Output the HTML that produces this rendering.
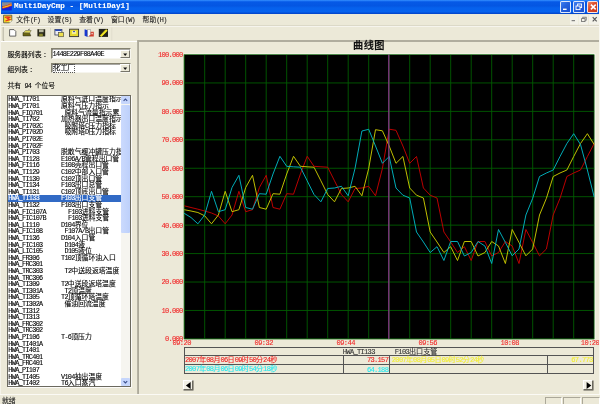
<!DOCTYPE html>
<html lang="zh-CN"><head><meta charset="utf-8"><title>MultiDayCmp - [MultiDay1]</title>
<style>
html,body{margin:0;padding:0;}
body{width:600px;height:404px;overflow:hidden;background:#ece9d8;position:relative;font-family:"Liberation Mono","Noto Sans CJK SC",monospace;font-size:6.85px;color:#000;line-height:1;-webkit-text-stroke:0.1px;}
div,span{position:absolute;white-space:nowrap;}
.d span.l,.menu span.l,.lbl span.l{position:static;}
.l{font-family:"Liberation Mono","Noto Sans CJK SC",monospace;letter-spacing:-0.685px;}
#tb{left:0;top:0;width:600px;height:13.8px;background:linear-gradient(#3d95ff 0,#1b74f4 6%,#0659e6 14%,#0456e2 42%,#0661ec 56%,#0662ee 84%,#0450da 92%,#0341c4 100%);}
#tt{left:14px;top:2.6px;font-family:"Liberation Mono","Noto Sans CJK SC",monospace;font-weight:bold;font-size:7.7px;color:#fff;letter-spacing:0.02px;}
.wb{top:1.4px;width:11.2px;height:11.2px;border-radius:1.6px;box-sizing:border-box;border:0.55px solid rgba(255,255,255,0.85);background:linear-gradient(135deg,#3f7ef0,#2460dc 45%,#1a4fd0);}
#menu{left:0;top:14px;width:600px;height:11.5px;background:#ece9d8;}
.menu{top:16.6px;color:#222;}
#tbar{left:0;top:25.2px;width:600px;height:15.3px;background:#ece9d8;border-top:0.7px solid #dcd9c8;box-sizing:border-box;box-shadow:inset 0 0.8px 0 #f9f8f3;}
#left{left:0;top:41.7px;width:137px;height:352.3px;background:#ece9d8;}
#split{left:137.1px;top:40.2px;width:1.8px;height:353.4px;background:linear-gradient(90deg,#bab7a8,#a9a697);}
#topline{left:137.2px;top:40.2px;width:462px;height:1.5px;background:#b0ad9e;}
#lwl{left:0;top:40.5px;width:137.2px;height:1.2px;background:#fff;}
.lbl{color:#000;font-size:6.84px;}
.cb{background:#fff;border:0.9px solid;border-color:#85826f #f6f5ee #f6f5ee #85826f;box-sizing:border-box;box-shadow:inset 0.5px 0.5px 0 #55534a;}
.cbb{width:9.4px;height:8.4px;background:#ece9d8;border:0.7px solid;border-color:#fff #77756a #77756a #fff;box-sizing:border-box;}
#list{left:6.6px;top:94.9px;width:124.7px;height:292.6px;background:#fff;border:0.9px solid #6b695f;box-sizing:border-box;overflow:hidden;box-shadow:0.8px 0.8px 0 #fff;}
.row{left:0;width:115px;height:6.6px;}
.row .t{left:0.7px;top:0.2px;}
.row .d{top:0.2px;}
.row.sel{background:#316ac5;color:#fff;width:113.6px;}
#sb{left:113.6px;top:0;width:9.6px;height:291px;background:#f6f5f0;}
#sbu,#sbd{left:0.3px;width:9px;height:8.3px;background:#c6d6fc;border-radius:1px;}
#sbt{left:0.3px;top:9.6px;width:9px;height:127.5px;background:linear-gradient(90deg,#cbdafd,#bdd0fb);border-radius:1px;}
.plot{position:absolute;left:0;top:0;}
#ct{left:339px;width:60px;text-align:center;top:41.1px;font-family:"Liberation Sans","Noto Sans CJK SC",sans-serif;font-weight:bold;font-size:10.2px;color:#111;letter-spacing:0.4px;}
.yl{left:140px;width:42.6px;text-align:right;color:#f02828;font-size:7.1px;letter-spacing:-0.75px;}
.xl{top:340.1px;width:30px;text-align:center;color:#f02828;font-size:7.1px;letter-spacing:-0.6px;}
#tbl{left:184.2px;top:347px;width:409.8px;height:27.2px;border:0.9px solid #545454;box-sizing:border-box;}
.hl{left:0;width:408px;height:0.9px;background:#555;}
.vl{width:0.9px;background:#545454;top:7.4px;height:18.4px;}
.c{font-size:7.1px;}
.c .l{letter-spacing:-0.71px;position:static;}
.c.l{letter-spacing:-0.71px;}
#status{left:0;top:394px;width:600px;height:10px;background:#ece9d8;border-top:0.7px solid #fbfaf5;box-sizing:border-box;}
.ab{width:10.3px;height:10.3px;background:#f2f0e6;border:0.8px solid;border-color:#fff #6a685e #6a685e #fff;box-sizing:border-box;box-shadow:0.5px 0.5px 0 #55534a;}
.pane{top:1.5px;height:9px;border:0.7px solid #aba899;border-right-color:#fff;border-bottom-color:#fff;box-sizing:border-box;}
#all{left:0;top:0;width:600px;height:404px;overflow:hidden;will-change:transform;filter:blur(0.3px);}
</style></head><body>
<div id="all">
<div id="tb">
<svg style="position:absolute;left:0;top:0" width="14" height="14" viewBox="0 0 14 14"><rect x="2" y="2.3" width="9.8" height="4" fill="#8a8c92"/><rect x="2" y="6" width="9.8" height="4.4" fill="#1420d8"/><path d="M2.2 7.6L4.4 7.2L6 6.6L8.2 6.2L9.6 5.2L11.6 4.8" stroke="#e83818" stroke-width="2.4" fill="none"/><path d="M2.6 7.4L4.6 7L6.2 6.6L8.2 6L9.8 5.2L11.4 5" stroke="#f8e020" stroke-width="1" fill="none"/></svg>
<span id="tt">MultiDayCmp - [MultiDay1]</span>
<div class="wb" style="left:559.8px"><svg width="10" height="10" style="position:absolute;left:0;top:0"><rect x="2" y="6.6" width="3.6" height="1.4" fill="#fff"/></svg></div>
<div class="wb" style="left:573.4px"><svg width="10" height="10" style="position:absolute;left:0;top:0"><rect x="3.6" y="2" width="4" height="3.6" fill="none" stroke="#fff" stroke-width="0.9"/><rect x="2" y="4" width="4" height="3.6" fill="#2a62d8" stroke="#fff" stroke-width="0.9"/></svg></div>
<div class="wb" style="left:586.9px;width:11.6px;background:linear-gradient(135deg,#ee8866,#dc4a28 45%,#c8361a)"><svg width="10" height="10" style="position:absolute;left:0;top:0"><path d="M2.9 2.6L7.7 7.4M7.7 2.6L2.9 7.4" stroke="#fff" stroke-width="1.5"/></svg></div>
</div>
<div id="menu"></div>
<svg style="position:absolute;left:0;top:14px" width="14" height="11" viewBox="0 14 14 11"><path d="M3.6 15.2H11.8V20.6L9.6 22.8H3.6Z" fill="#f6e028" stroke="#3a3a30" stroke-width="0.7"/><path d="M11.8 20.6L9.6 22.8V20.6Z" fill="#fff"/><path d="M4.8 17.4L7 16.8L10 17.2L7.4 18.6L10 19.6L5.4 21" fill="none" stroke="#e83020" stroke-width="1.2"/></svg>
<span class="menu" style="left:16.3px">文件<span class="l">(F)</span></span>
<span class="menu" style="left:47.6px">设置<span class="l">(S)</span></span>
<span class="menu" style="left:79.2px">查看<span class="l">(V)</span></span>
<span class="menu" style="left:111px">窗口<span class="l">(W)</span></span>
<span class="menu" style="left:142.6px">帮助<span class="l">(H)</span></span>
<svg style="position:absolute;left:566px;top:14px" width="34" height="12" viewBox="0 0 34 12"><rect x="4" y="1" width="8" height="9.6" fill="#f3f2e9"/><rect x="12.6" y="1" width="9.4" height="9.6" fill="#f3f2e9"/><rect x="23" y="1" width="10" height="9.6" fill="#f3f2e9"/><rect x="5.6" y="6.1" width="3.4" height="1.1" fill="#777"/><rect x="16.8" y="3.2" width="3.4" height="3" fill="none" stroke="#6a6a6a" stroke-width="0.8"/><rect x="15.6" y="4.6" width="3.4" height="3" fill="#f3f2e9" stroke="#6a6a6a" stroke-width="0.8"/><path d="M26.7 3.2L30.7 7.4M30.7 3.2L26.7 7.4" stroke="#555" stroke-width="1.15"/></svg>
<div id="tbar">
<svg style="position:absolute;left:0;top:-0.4px" width="120" height="15" viewBox="0 25.5 120 15">
<path d="M3.2 26.5V40H4.2" stroke="#a8a594" stroke-width="0.8" fill="none"/>
<path d="M9.6 29.1H14L15.8 30.9V35.6H9.6Z" fill="#fff" stroke="#444" stroke-width="0.8"/>
<path d="M23 32H29.4L30.8 35.4H23Z" fill="#6a6410" stroke="#332" stroke-width="0.6"/><path d="M23.4 32.2L25.6 30H31.2L29.8 32.4Z" fill="#dcd458" stroke="#554" stroke-width="0.5"/><path d="M28 29.2L30 28.6" stroke="#333" stroke-width="0.6"/>
<rect x="37.4" y="28.7" width="7.8" height="7.2" fill="#2a2a1c"/><rect x="39" y="28.9" width="4.6" height="2.8" fill="#b8b8a0"/><rect x="39.2" y="33.2" width="3.6" height="2.7" fill="#8a8830"/>
<path d="M50.5 27.5V39" stroke="#d8d5c4" stroke-width="0.9"/>
<rect x="54.9" y="28.9" width="7" height="5.6" fill="#ececf4" stroke="#333a55" stroke-width="0.8"/><rect x="55.2" y="29" width="6.4" height="1.5" fill="#2848b8"/><rect x="58.6" y="32" width="5" height="4.2" fill="#efe050" stroke="#554" stroke-width="0.7"/>
<rect x="69.6" y="28.7" width="9" height="7.4" fill="#e6da30" stroke="#333" stroke-width="0.9"/><rect x="72" y="30.4" width="4.2" height="3" fill="#f4f0a0"/><rect x="73" y="30.4" width="2" height="1.2" fill="#4858c0"/>
<path d="M84.6 28.8L87.6 29.8V36.4L84.6 35.2Z" fill="#1838d0"/><rect x="87.8" y="29.2" width="2.6" height="6.8" fill="#fafafa" stroke="#777" stroke-width="0.4"/><path d="M90.6 31.2H93.8V36H89.4V34.6H90.6Z" fill="#d04030"/><rect x="91.4" y="32.4" width="1.4" height="1.4" fill="#f4d0c8"/>
<rect x="98.8" y="28.4" width="9.2" height="8" fill="#20201a"/><path d="M100.2 35.2L105.6 29.4H107V30.6L101.6 36Z" fill="#f4e820" stroke="#f4e820" stroke-width="0.7"/>
<path d="M111.8 27V40" stroke="#dcd9c8" stroke-width="0.7"/>
</svg>
</div>
<div id="topline"></div><div id="lwl"></div>
<div id="left"></div>
<div id="split"></div>
<span class="lbl" style="left:7.4px;top:51.5px">服务器列表<span style="position:static;padding-left:1.6px">：</span></span>
<div class="cb" style="left:50.8px;top:48.4px;width:80px;height:10.4px"><span class="l" style="left:0.8px;top:1.4px;position:absolute">1448E229F08A40E</span><div class="cbb" style="left:68.6px;top:0.2px"><svg width="9" height="8" style="position:absolute;left:0;top:0"><path d="M2.2 2.6H6.2L4.2 5Z" fill="#111"/></svg></div></div>
<span class="lbl" style="left:7.4px;top:66.8px">组列表<span style="position:static;padding-left:1.6px">：</span></span>
<div class="cb" style="left:50.8px;top:62.9px;width:80px;height:10.3px"><span style="left:1.8px;top:1.4px;outline:0.5px dotted #555">化工厂</span><div class="cbb" style="left:68.6px;top:0.2px"><svg width="9" height="8" style="position:absolute;left:0;top:0"><path d="M2.2 2.6H6.2L4.2 5Z" fill="#111"/></svg></div></div>
<span class="lbl" style="left:7.4px;top:83.0px">共有<span class="l"> 94 </span>个位号</span>
<div id="list">
<div class="row" style="top:0.30px"><span class="t l">HWA_TI701</span><span class="d" style="left:53.4px">原料气进口温度指示</span></div>
<div class="row" style="top:6.90px"><span class="t l">HWA_PI701</span><span class="d" style="left:53.4px">原料气压力指示</span></div>
<div class="row" style="top:13.50px"><span class="t l">HWA_FIQ701</span><span class="d" style="left:56.9px">原料气流量指示累</span></div>
<div class="row" style="top:20.10px"><span class="t l">HWA_TI702</span><span class="d" style="left:53.4px">加热器出口温度指示</span></div>
<div class="row" style="top:26.70px"><span class="t l">HWA_PI702C</span><span class="d" style="left:56.9px">吸附塔<span class="l">C</span>压力指标</span></div>
<div class="row" style="top:33.30px"><span class="t l">HWA_PI702D</span><span class="d" style="left:56.9px">吸附塔<span class="l">D</span>压力指标</span></div>
<div class="row" style="top:39.90px"><span class="t l">HWA_PI702E</span></div>
<div class="row" style="top:46.50px"><span class="t l">HWA_PI702F</span></div>
<div class="row" style="top:53.10px"><span class="t l">HWA_PI703</span><span class="d" style="left:53.4px">脱散气缓冲罐压力指</span></div>
<div class="row" style="top:59.70px"><span class="t l">HWA_TI128</span><span class="d" style="left:53.4px"><span class="l">E106A/B</span>管程出口管</span></div>
<div class="row" style="top:66.30px"><span class="t l">HWA_FI116</span><span class="d" style="left:53.4px"><span class="l">E108</span>壳程出口管</span></div>
<div class="row" style="top:72.90px"><span class="t l">HWA_TI129</span><span class="d" style="left:53.4px"><span class="l">C102</span>中部入口管</span></div>
<div class="row" style="top:79.50px"><span class="t l">HWA_TI130</span><span class="d" style="left:53.4px"><span class="l">C102</span>顶出口管</span></div>
<div class="row" style="top:86.10px"><span class="t l">HWA_TI134</span><span class="d" style="left:53.4px"><span class="l">F103</span>出口总管</span></div>
<div class="row" style="top:92.70px"><span class="t l">HWA_TI131</span><span class="d" style="left:53.4px"><span class="l">C102</span>顶底出口管</span></div>
<div class="row sel" style="top:99.30px"><span class="t l">HWA_TI133</span><span class="d" style="left:53.4px"><span class="l">F103</span>出口支管</span></div>
<div class="row" style="top:105.90px"><span class="t l">HWA_TI132</span><span class="d" style="left:53.4px"><span class="l">F103</span>出口支管</span></div>
<div class="row" style="top:112.50px"><span class="t l">HWA_FIC107A</span><span class="d" style="left:60.4px"><span class="l">F103</span>进料支管</span></div>
<div class="row" style="top:119.10px"><span class="t l">HWA_FIC107B</span><span class="d" style="left:60.4px"><span class="l">F103</span>进料支管</span></div>
<div class="row" style="top:125.70px"><span class="t l">HWA_LI110</span><span class="d" style="left:53.4px"><span class="l">D104</span>界位</span></div>
<div class="row" style="top:132.30px"><span class="t l">HWA_FIC108</span><span class="d" style="left:56.9px"><span class="l">F107A/B</span>出口管</span></div>
<div class="row" style="top:138.90px"><span class="t l">HWA_TI136</span><span class="d" style="left:53.4px"><span class="l">D104</span>入口管</span></div>
<div class="row" style="top:145.50px"><span class="t l">HWA_FIC103</span><span class="d" style="left:56.9px"><span class="l">D104</span>液</span></div>
<div class="row" style="top:152.10px"><span class="t l">HWA_LIC105</span><span class="d" style="left:56.9px"><span class="l">D105</span>液位</span></div>
<div class="row" style="top:158.70px"><span class="t l">HWA_FR306</span><span class="d" style="left:53.4px"><span class="l">T102</span>顶循环油入口</span></div>
<div class="row" style="top:165.30px"><span class="t l">HWA_FRC301</span></div>
<div class="row" style="top:171.90px"><span class="t l">HWA_TRC303</span><span class="d" style="left:56.9px"><span class="l">T2</span>中送段返塔温度</span></div>
<div class="row" style="top:178.50px"><span class="t l">HWA_TRC306</span></div>
<div class="row" style="top:185.10px"><span class="t l">HWA_TI309</span><span class="d" style="left:53.4px"><span class="l">T2</span>中送段返塔温度</span></div>
<div class="row" style="top:191.70px"><span class="t l">HWA_TI301A</span><span class="d" style="left:56.9px"><span class="l">T2</span>顶温度</span></div>
<div class="row" style="top:198.30px"><span class="t l">HWA_TI305</span><span class="d" style="left:53.4px"><span class="l">T2</span>顶循环塔温度</span></div>
<div class="row" style="top:204.90px"><span class="t l">HWA_TI302A</span><span class="d" style="left:56.9px">催油回流温度</span></div>
<div class="row" style="top:211.50px"><span class="t l">HWA_TI312</span></div>
<div class="row" style="top:218.10px"><span class="t l">HWA_TI313</span></div>
<div class="row" style="top:224.70px"><span class="t l">HWA_FRC302</span></div>
<div class="row" style="top:231.30px"><span class="t l">HWA_TRC302</span></div>
<div class="row" style="top:237.90px"><span class="t l">HWA_PI106</span><span class="d" style="left:53.4px"><span class="l">T-6</span>顶压力</span></div>
<div class="row" style="top:244.50px"><span class="t l">HWA_TI401A</span></div>
<div class="row" style="top:251.10px"><span class="t l">HWA_TI401</span></div>
<div class="row" style="top:257.70px"><span class="t l">HWA_TRC401</span></div>
<div class="row" style="top:264.30px"><span class="t l">HWA_FRC401</span></div>
<div class="row" style="top:270.90px"><span class="t l">HWA_PI107</span></div>
<div class="row" style="top:277.50px"><span class="t l">HWA_TI405</span><span class="d" style="left:53.4px"><span class="l">V104</span>抽出温度</span></div>
<div class="row" style="top:284.10px"><span class="t l">HWA_TI402</span><span class="d" style="left:53.4px"><span class="l">T6</span>入口蒸汽</span></div>
<div class="row" style="top:290.70px"><span class="t l">HWA_TI403</span><span class="d" style="left:53.4px"><span class="l">T6</span>顶出口</span></div>

<div id="sb"><div id="sbu" style="top:0.3px"><svg width="9" height="8" style="position:absolute;left:0;top:0"><path d="M2.6 4.8L4.4 3L6.2 4.8" stroke="#3a4f8c" stroke-width="1.1" fill="none"/></svg></div><div id="sbt"></div><div id="sbd" style="top:282.2px"><svg width="9" height="8" style="position:absolute;left:0;top:0"><path d="M2.6 3.2L4.4 5L6.2 3.2" stroke="#3a4f8c" stroke-width="1.1" fill="none"/></svg></div></div>
</div>
<span id="ct">曲线图</span>
<svg class="plot" width="600" height="404" viewBox="0 0 600 404">
<rect x="184.2" y="54.5" width="410.0" height="284.4" fill="#000"/>
<path d="M184.20 54.5V338.9M204.70 54.5V338.9M225.20 54.5V338.9M245.70 54.5V338.9M266.20 54.5V338.9M286.70 54.5V338.9M307.20 54.5V338.9M327.70 54.5V338.9M348.20 54.5V338.9M368.70 54.5V338.9M389.20 54.5V338.9M409.70 54.5V338.9M430.20 54.5V338.9M450.70 54.5V338.9M471.20 54.5V338.9M491.70 54.5V338.9M512.20 54.5V338.9M532.70 54.5V338.9M553.20 54.5V338.9M573.70 54.5V338.9M594.20 54.5V338.9M184.2 338.90H594.2M184.2 310.46H594.2M184.2 282.02H594.2M184.2 253.58H594.2M184.2 225.14H594.2M184.2 196.70H594.2M184.2 168.26H594.2M184.2 139.82H594.2M184.2 111.38H594.2M184.2 82.94H594.2M184.2 54.50H594.2" stroke="#005c00" stroke-width="0.9" fill="none"/>
<polyline points="184.2,205.8 191.0,207.5 197.9,209.2 204.7,211.0 211.5,213.0 218.4,216.0 225.2,223.8 232.0,215.0 238.9,191.3 245.7,211.7 252.5,209.7 259.4,187.5 266.2,175.3 273.0,207.5 279.9,209.2 286.7,193.7 293.5,194.2 300.4,174.0 307.2,156.3 314.0,166.3 320.9,166.8 327.7,167.2 334.5,180.8 341.4,194.5 348.2,201.8 355.0,188.5 361.9,188.0 368.7,186.3 375.5,195.8 382.4,168.5 389.2,129.2 396.0,130.3 402.9,146.0 409.7,163.3 416.5,156.5 423.4,188.0 430.2,195.2 437.0,198.0 443.9,232.0 450.7,242.0 457.5,252.5 464.4,246.7 471.2,260.5 478.0,241.5 484.9,241.5 491.7,256.0 498.5,252.5 505.4,241.5 512.2,246.0 519.0,263.5 525.9,229.5 532.7,242.5 539.5,255.8 546.4,249.0 553.2,215.0 560.0,198.3 566.9,176.5 573.7,173.0 580.5,170.0 587.4,156.5 594.2,143.5" fill="none" stroke="#c40000" stroke-width="0.95"/>
<polyline points="184.2,209.7 191.0,211.0 197.9,212.5 204.7,215.8 211.5,223.8 218.4,215.0 225.2,191.3 232.0,211.7 238.9,209.7 245.7,187.5 252.5,175.3 259.4,207.5 266.2,209.2 273.0,193.7 279.9,194.2 286.7,174.0 293.5,156.3 300.4,166.3 307.2,166.8 314.0,167.2 320.9,180.8 327.7,194.5 334.5,201.8 341.4,188.5 348.2,188.0 355.0,186.3 361.9,195.8 368.7,168.5 375.5,129.7 382.4,130.8 389.2,146.0 396.0,163.3 402.9,156.5 409.7,188.0 416.5,195.2 423.4,198.0 430.2,232.0 437.0,242.0 443.9,252.5 450.7,246.7 457.5,260.5 464.4,241.5 471.2,241.5 478.0,256.0 484.9,252.5 491.7,241.5 498.5,246.0 505.4,263.5 512.2,229.5 519.0,242.5 525.9,255.8 532.7,249.0 539.5,215.0 546.4,198.3 553.2,176.5 560.0,173.0 566.9,170.0 573.7,156.5 580.5,143.5 587.4,133.7 594.2,144.5" fill="none" stroke="#c8c800" stroke-width="0.95"/>
<polyline points="184.2,213.3 191.0,217.5 197.9,223.8 204.7,215.0 211.5,191.3 218.4,211.7 225.2,209.7 232.0,187.5 238.9,175.3 245.7,207.5 252.5,209.2 259.4,193.7 266.2,194.2 273.0,174.0 279.9,156.3 286.7,166.3 293.5,166.8 300.4,167.2 307.2,180.8 314.0,194.5 320.9,201.8 327.7,188.5 334.5,188.0 341.4,186.3 348.2,195.8 355.0,168.5 361.9,131.0 368.7,129.3 375.5,146.0 382.4,163.3 389.2,156.5 396.0,188.0 402.9,195.2 409.7,198.0 416.5,232.0 423.4,242.0 430.2,252.5 437.0,246.7 443.9,260.5 450.7,241.5 457.5,241.5 464.4,256.0 471.2,252.5 478.0,241.5 484.9,246.0 491.7,263.5 498.5,229.5 505.4,242.5 512.2,255.8 519.0,249.0 525.9,215.0 532.7,198.3 539.5,176.5 546.4,173.0 553.2,170.0 560.0,156.5 566.9,143.5 573.7,133.7 580.5,144.5 587.4,170.0 594.2,197.0" fill="none" stroke="#00b4c0" stroke-width="0.95"/>
<path d="M388.8 54.5V338.9" stroke="#8a388a" stroke-width="1.25"/>
<path d="M184.2 53.9H595.1V338.9" stroke="#fbfaf4" stroke-width="0.7" fill="none"/>
</svg>
<div class="yl" style="top:336.3px">0.000</div><div class="yl" style="top:307.9px">10.000</div><div class="yl" style="top:279.4px">20.000</div><div class="yl" style="top:251.0px">30.000</div><div class="yl" style="top:222.5px">40.000</div><div class="yl" style="top:194.1px">50.000</div><div class="yl" style="top:165.7px">60.000</div><div class="yl" style="top:137.2px">70.000</div><div class="yl" style="top:108.8px">80.000</div><div class="yl" style="top:80.3px">90.000</div><div class="yl" style="top:51.9px">100.000</div>
<div class="xl" style="left:166.7px">09:20</div><div class="xl" style="left:248.7px">09:32</div><div class="xl" style="left:330.7px">09:44</div><div class="xl" style="left:412.7px">09:56</div><div class="xl" style="left:494.7px">10:08</div><div class="xl" style="left:575.0px">10:20</div>
<div id="tbl">
<div class="hl" style="top:6.95px"></div><div class="hl" style="top:16.35px"></div>
<div class="vl" style="left:157.6px"></div><div class="vl" style="left:203.5px"></div><div class="vl" style="left:362px"></div>
<span class="c l" style="left:157.6px;top:0.6px;color:#333">HWA_TI133</span>
<span class="c" style="left:209.6px;top:0.6px;color:#333"><span class="l">F103</span>出口支管</span>
<span class="c" style="left:-0.2px;top:9.0px;color:#f02020"><span class="l">2007</span>年<span class="l">08</span>月<span class="l">06</span>日<span class="l">09</span>时<span class="l">50</span>分<span class="l">24</span>秒</span>
<span class="c l" style="left:169px;width:34px;text-align:right;top:9.2px;color:#f02020">73.157</span>
<span class="c" style="left:206.6px;top:9.0px;color:#f2ee30"><span class="l">2007</span>年<span class="l">08</span>月<span class="l">05</span>日<span class="l">09</span>时<span class="l">52</span>分<span class="l">24</span>秒</span>
<span class="c l" style="left:370px;width:37.4px;text-align:right;top:9.2px;color:#f2ee30">67.773</span>
<span class="c" style="left:-0.2px;top:18.3px;color:#20e8f0"><span class="l">2007</span>年<span class="l">08</span>月<span class="l">06</span>日<span class="l">09</span>时<span class="l">54</span>分<span class="l">18</span>秒</span>
<span class="c l" style="left:169px;width:34px;text-align:right;top:18.5px;color:#20e8f0">64.188</span>
</div>
<div class="ab" style="left:183px;top:380px"><svg width="9" height="9" style="position:absolute;left:0;top:0"><path d="M6.6 0.9V8.1L1.9 4.5Z" fill="#000"/></svg></div>
<div class="ab" style="left:582.8px;top:380px"><svg width="9" height="9" style="position:absolute;left:0;top:0"><path d="M2.6 0.9V8.1L7.3 4.5Z" fill="#000"/></svg></div>
<div style="left:0;top:0;width:1px;height:404px;background:#f5f3ea"></div><div style="left:599px;top:0;width:1px;height:404px;background:#f8f7f0"></div>
<div id="status"><span style="left:2px;top:2.6px;color:#222">就绪</span>
<div class="pane" style="left:544.7px;width:17.3px"></div><div class="pane" style="left:563.3px;width:17.4px"></div><div class="pane" style="left:582px;width:17.6px"></div>
</div>
</div>
</body></html>
